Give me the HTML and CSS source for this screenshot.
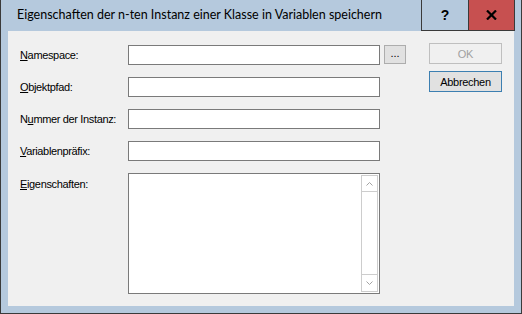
FILE: index.html
```html
<!DOCTYPE html>
<html lang="de">
<head>
<meta charset="utf-8">
<link rel="stylesheet" href="styles.css">
</head>
<body>
<div class="window">
  <div class="titlebar">
    <div class="title">Eigenschaften der n-ten Instanz einer Klasse in Variablen speichern</div>
    <div class="tb-btn help">?</div>
    <div class="tb-btn close">
      <svg width="11" height="10" viewBox="0 0 11 10"><path d="M1 0.5 L10 9.5 M10 0.5 L1 9.5" stroke="#000" stroke-width="2.2"/></svg>
    </div>
  </div>
  <div class="content">
    <div class="form">
      <label class="lbl"><u>N</u>amespace:</label>
      <div class="box"></div>
      <div class="dots">...</div>

      <label class="lbl"><u>O</u>bjektpfad:</label>
      <div class="box"></div>
      <div></div>

      <label class="lbl">N<u>u</u>mmer der Instanz:</label>
      <div class="box"></div>
      <div></div>

      <label class="lbl"><u>V</u>ariablenpräfix:</label>
      <div class="box"></div>
      <div></div>

      <label class="lbl lbl-top"><u>E</u>igenschaften:</label>
      <div class="box area">
        <div class="scroll">
          <div class="arrow up"><svg width="7" height="4" viewBox="0 0 7 4"><path d="M0.5 3.5 L3.5 0.5 L6.5 3.5" fill="none" stroke="#a3a3a3" stroke-width="1"/></svg></div>
          <div class="track"></div>
          <div class="arrow down"><svg width="7" height="4" viewBox="0 0 7 4"><path d="M0.5 0.5 L3.5 3.5 L6.5 0.5" fill="none" stroke="#a3a3a3" stroke-width="1"/></svg></div>
        </div>
      </div>
      <div></div>
    </div>
    <div class="buttons">
      <div class="btn disabled">OK</div>
      <div class="btn default">Abbrechen</div>
    </div>
  </div>
</div>
</body>
</html>
```

FILE: styles.css
```css
* { box-sizing: border-box; }
html, body { margin: 0; padding: 0; }
body { width: 522px; height: 314px; overflow: hidden; background: #b5c9dd; }

.window {
  width: 522px;
  height: 314px;
  background: #b5c9dd;
  border: 1px solid #3a3a3a;
  border-top: none;
  display: flex;
  flex-direction: column;
  padding: 0 6px 7px 7px;
}

.titlebar {
  height: 31px;
  display: flex;
  align-items: stretch;
  flex: none;
}
.title {
  flex: 1;
  font-family: Lato, "Noto Sans", sans-serif;
  font-size: 12.5px;
  color: #000;
  padding-left: 9px;
  padding-top: 7px;
  white-space: nowrap;
}
.tb-btn {
  width: 47px;
  border-left: 1px solid #3a3a3a;
  border-bottom: 1px solid #3a3a3a;
  display: flex;
  align-items: center;
  justify-content: center;
}
.help {
  font-family: "Liberation Sans", sans-serif;
  font-weight: bold;
  font-size: 14px;
  color: #000;
  padding-bottom: 1px;
}
.close {
  width: 47px;
  background: #c75050;
  border-right: 1px solid #3a3a3a;
  padding-bottom: 1px;
}
.close svg { display: block; }

.content {
  flex: 1;
  background: #f0f0f0;
  width: 506px;
  display: flex;
  padding: 12px 0 0 12px;
  font-family: "Liberation Sans", Arial, sans-serif;
  font-size: 11px;
  color: #000;
}

.form {
  margin-top: 2px;
  display: grid;
  grid-template-columns: 108px 252px 26px;
  grid-template-rows: 20px 20px 20px 20px 121px;
  row-gap: 12px;
  align-items: center;
}
.form > :nth-child(3n) { margin-left: 4px; width: 22px; }
.lbl { display: block; white-space: nowrap; letter-spacing: -0.35px; }
.lbl u { text-decoration: underline; text-underline-offset: 1px; }
.lbl-top { align-self: start; padding-top: 5px; }

.box {
  height: 20px;
  width: 252px;
  background: #fff;
  border: 1px solid #7a7a7a;
}
.form > .area {
  height: 121px;
  align-self: start;
  display: flex;
  justify-content: flex-end;
  padding: 1px;
}

.scroll {
  width: 17px;
  height: 117px;
  border: 1px solid #cdcdcd;
  display: flex;
  flex-direction: column;
  background: #fff;
}
.arrow {
  display: flex;
  align-items: center;
  justify-content: center;
  flex: none;
}
.arrow svg { display: block; }
.up { border-bottom: 1px solid #cdcdcd; height: 16px; }
.down { border-top: 1px solid #cdcdcd; height: 17px; }
.track { flex: 1; }

.dots {
  align-self: start;
  height: 19px;
  background: #e1e1e1;
  border: 1px solid #adadad;
  text-align: center;
  line-height: 14px;
  font-size: 11px;
  color: #000;
}

.buttons {
  margin-left: 23px;
  display: flex;
  flex-direction: column;
  gap: 7px;
}
.btn {
  width: 73px;
  height: 21px;
  display: flex;
  align-items: center;
  justify-content: center;
  font-size: 11px;
  letter-spacing: -0.3px;
}
.disabled {
  background: #f0f0f0;
  border: 1px solid #bfbfbf;
  color: #a0a0a0;
}
.default {
  background: #e1e1e1;
  border: 1px solid #3c7fb1;
  color: #000;
}
```
